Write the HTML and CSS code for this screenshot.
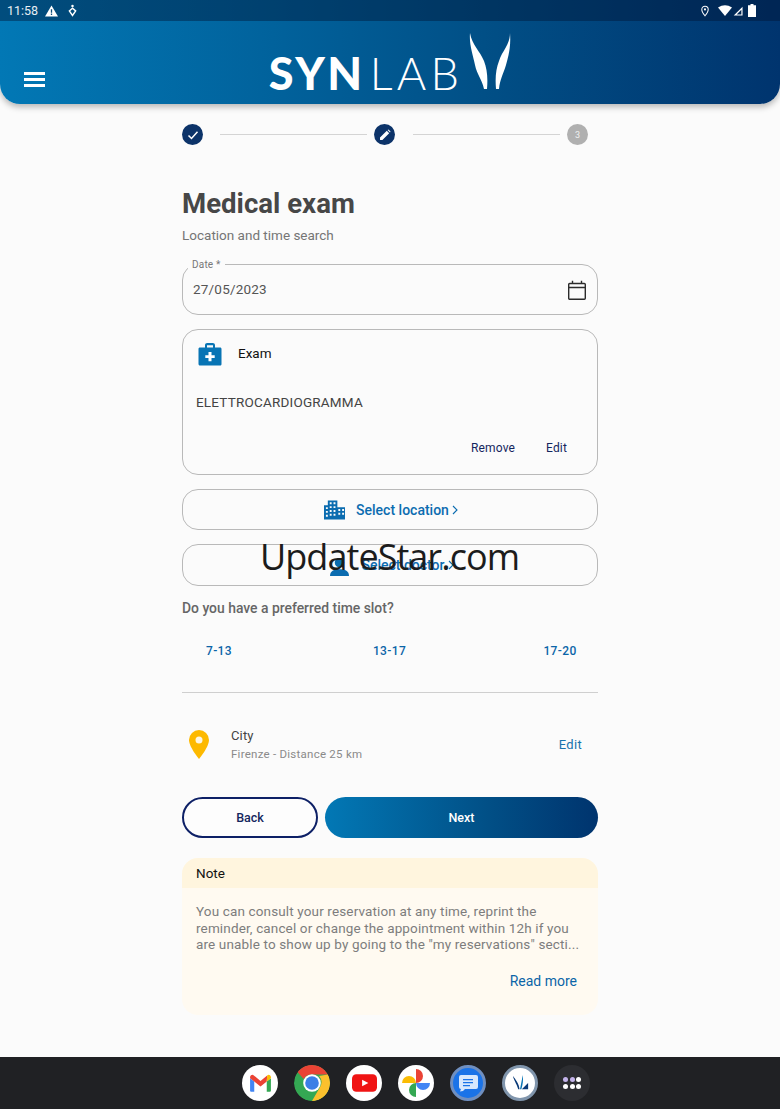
FILE: index.html
```html
<!DOCTYPE html>
<html lang="en">
<head>
<meta charset="utf-8">
<title>Medical exam</title>
<link rel="stylesheet" href="styles.css">
</head>
<body>
<div class="app">
  <header class="appbar">
    <div class="status">
      <div class="status-left">
        <span class="clock">11:58</span>
        <svg class="st-warn" viewBox="0 0 14 12"><path d="M7 0 14 12H0Z" fill="#fff"/><path d="M6.300 4h1.400v4H6.300zM6.300 8.800h1.400v1.400H6.300z" fill="#0a4a78"/></svg>
        <svg class="st-acc" viewBox="0 0 10 14"><circle cx="5" cy="2" r="1.400" fill="#fff"/><path d="M1.500 7.500 5 4.500l3.500 3L5 12.500Z" fill="none" stroke="#fff" stroke-width="1.600"/></svg>
      </div>
      <div class="status-right">
        <svg class="st-pin" viewBox="0 0 10 14"><path d="M5 1a4 4 0 0 1 4 4c0 3-4 8-4 8S1 8 1 5a4 4 0 0 1 4-4Z" fill="none" stroke="#fff" stroke-width="1.300"/><circle cx="5" cy="5" r="1.300" fill="#fff"/></svg>
        <svg class="st-wifi" viewBox="0 0 14 11"><path d="M0 2.500Q7-2 14 2.500L7 11Z" fill="#fff"/></svg>
        <svg class="st-sig" viewBox="0 0 11 11"><path d="M10.500.8v9.700H.8ZM9.200 4 4 9.400h5.200Z" fill="#fff" fill-rule="evenodd"/></svg>
        <svg class="st-bat" viewBox="0 0 8 13"><path d="M2.500 0h3v1.200H8V13H0V1.200h2.500Z" fill="#fff"/></svg>
      </div>
    </div>
    <div class="toolbar">
      <button class="burger" aria-label="Menu"><span></span><span></span><span></span></button>
      <div class="logo">
        <span class="logo-text"><b>SYN</b><span class="logo-lab">LAB</span></span>
        <svg class="logo-mark" viewBox="0 0 42 56"><path d="M1 0C0 12 4 22 6 32c2 10 7 14 9 24h3c1-12 0-20-3-28C11 18 3 12 1 0ZM41 0c0 12-8 18-11 28-3 8-4 16-3 28h3c1-10 4-14 7-24 3-10 5-20 4-32Z" fill="#fff"/></svg>
      </div>
    </div>
  </header>

  <main class="content">
    <div class="stepper">
      <span class="step done"><svg viewBox="0 0 12 12"><path d="M1.500 6.500 4.500 9.500 10.500 2.800" fill="none" stroke="#fff" stroke-width="1.500"/></svg></span>
      <span class="step-line"></span>
      <span class="step done"><svg viewBox="0 0 12 12"><path d="M1 11V8.600L7.800 1.800l2.400 2.400L3.400 11ZM8.600 1l.9-.5 2 2-.5.9Z" fill="#fff"/></svg></span>
      <span class="step-line"></span>
      <span class="step todo">3</span>
    </div>

    <h1 class="title">Medical exam</h1>
    <p class="subtitle">Location and time search</p>

    <div class="date-field">
      <span class="date-label">Date *</span>
      <span class="date-value">27/05/2023</span>
      <svg class="cal" viewBox="0 0 18 20"><path d="M1.700 3.500h14.600a1 1 0 0 1 1 1v13.800a1 1 0 0 1-1 1H1.700a1 1 0 0 1-1-1V4.500a1 1 0 0 1 1-1ZM.7 7.500h16.600M4.500 .8v2.700M13.500 .8v2.700" fill="none" stroke="#2b2b2b" stroke-width="1.400"/></svg>
    </div>

    <section class="exam-card">
      <div class="exam-head">
        <svg class="kit" viewBox="0 0 24 24"><path d="M2 5.500h5V3.200C7 1.900 8 1 9.200 1h5.600C16 1 17 1.900 17 3.200v2.300h5c1 0 1.500.6 1.500 1.500v15c0 1-.6 1.500-1.500 1.500H2c-1 0-1.500-.6-1.500-1.500V7c0-1 .6-1.500 1.500-1.500Zm7-2.300v2.300h6V3.200Z" fill="#0874b4" fill-rule="evenodd"/><path d="M10.500 10h3v3.200h3.200v2.800h-3.200v3.200h-3V16H7.300v-2.800h3.200Z" fill="#fff"/></svg>
        <span class="exam-title">Exam</span>
      </div>
      <p class="exam-name">ELETTROCARDIOGRAMMA</p>
      <div class="exam-actions"><span>Remove</span><span>Edit</span></div>
    </section>

    <div class="select-btn sel-loc">
      <svg class="bld" viewBox="0 0 22 20"><path d="M4 0h10v7h8v13H0V5h4ZM6 2v2h2V2Zm4 0v2h2V2ZM6 6v2h2V6Zm4 0v2h2V6ZM2 7v2h2V7Zm4 3v2h2v-2Zm4 0v2h2v-2Zm5-1v2h2V9Zm4 0v2h2V9ZM2 11v2h2v-2Zm4 3v2h2v-2Zm4 0v2h2v-2Zm5-1v2h2v-2Zm4 0v2h2v-2ZM2 15v2h2v-2Z" fill="#0b6cb0" fill-rule="evenodd"/></svg>
      <span class="sel-text">Select location</span>
      <svg class="chev" viewBox="0 0 6 10"><path d="M1 1l4 4-4 4" fill="none" stroke="#0b6cb0" stroke-width="1.100"/></svg>
    </div>
    <div class="select-btn sel-doc">
      <svg class="person" viewBox="0 0 20 20"><circle cx="10" cy="6" r="5" fill="#0b6cb0"/><path d="M0 20c0-5 4-7 10-7s10 2 10 7Z" fill="#0b6cb0"/></svg>
      <span class="sel-text">Select doctor</span>
      <svg class="chev" viewBox="0 0 6 10"><path d="M1 1l4 4-4 4" fill="none" stroke="#0b6cb0" stroke-width="1.100"/></svg>
    </div>

    <p class="question">Do you have a preferred time slot?</p>
    <div class="slots"><span>7-13</span><span>13-17</span><span>17-20</span></div>
    <hr class="divider">

    <div class="city">
      <svg class="pin" viewBox="0 0 20 29"><path d="M10 0a10 10 0 0 1 10 10c0 7-10 19-10 19S0 17 0 10A10 10 0 0 1 10 0Z" fill="#fdb900"/><circle cx="10" cy="10" r="3.500" fill="#fdf6e3"/></svg>
      <div class="city-text">
        <span class="city-name">City</span>
        <span class="city-sub">Firenze - Distance 25 km</span>
      </div>
      <span class="city-edit">Edit</span>
    </div>

    <div class="actions">
      <button class="btn-back">Back</button>
      <button class="btn-next">Next</button>
    </div>

    <section class="note">
      <div class="note-head">Note</div>
      <div class="note-body">
        <p class="note-text">You can consult your reservation at any time, reprint the reminder, cancel or change the appointment within 12h if you are unable to show up by going to the "my reservations" secti...</p>
        <div class="note-more">Read more</div>
      </div>
    </section>
  </main>

  <nav class="dock">
    <span class="app-icon white">
      <svg viewBox="0 0 24 24" width="25" height="25"><path d="M2 7v12a1 1 0 0 0 1 1h3V10Z" fill="#4285f4"/><path d="M18 10v10h3a1 1 0 0 0 1-1V7Z" fill="#34a853"/><path d="M2 7V6C2 3.800 4.300 3 5.600 4.200L12 9.500 18.400 4.200 18 10l-6 4.800L6 10Z" fill="#ea4335"/><path d="M18.400 4.200C19.700 3 22 3.800 22 6v1l-4 3Z" fill="#fbbc04"/></svg>
    </span>
    <span class="app-icon">
      <svg viewBox="0 0 36 36" width="36" height="36"><circle cx="18" cy="18" r="18" fill="#34a853"/><path d="M18 0a18 18 0 0 1 16 9.500H18A9 9 0 0 0 9.700 14L3 6.500A18 18 0 0 1 18 0Z" fill="#ea4335"/><path d="M34 9.500A18 18 0 0 1 18 36l7.800-13.500A9 9 0 0 0 25 11Z" fill="#fbc02d"/><circle cx="18" cy="18" r="8.800" fill="#fff"/><circle cx="18" cy="18" r="6.800" fill="#3d7fe6"/></svg>
    </span>
    <span class="app-icon white">
      <svg viewBox="0 0 26 18" width="25" height="18"><rect width="26" height="18" rx="4.500" fill="#f01414"/><path d="M10.500 5.500 17 9l-6.500 3.500Z" fill="#fff"/></svg>
    </span>
    <span class="app-icon white">
      <svg viewBox="0 0 28 28" width="28" height="28"><path d="M14 14V0a7 7 0 0 1 0 14Z" fill="#ea4335"/><path d="M14 14H0a7 7 0 0 1 14 0Z" fill="#fbbc04"/><path d="M14 14v14a7 7 0 0 1 0-14Z" fill="#34a853"/><path d="M14 14h14a7 7 0 0 1-14 0Z" fill="#4285f4"/></svg>
    </span>
    <span class="app-icon msg">
      <svg viewBox="0 0 20 18" width="20" height="18"><path d="M3 1h15a2 2 0 0 1 2 2v10a2 2 0 0 1-2 2H7l-2 2-3 .5L3 15a2 2 0 0 1-2-2V3a2 2 0 0 1 2-2Z" fill="#d8e8fd"/><path d="M5 5h10v1.300H5zM5 8h10v1.300H5zM5 11h7v1.300H5z" fill="#1a73e8"/></svg>
    </span>
    <span class="app-icon syn">
      <svg viewBox="0 0 22 20" width="20" height="18"><path d="M3 2c1 5 4 8 6 15h1.500C10 11 6 6 3 2Z" fill="#0a3a78"/><path d="M14 1c-1 6-2 11-3 16h1.500C14 12 15 6 14 1Z" fill="#0874b4"/><path d="M13 17 20 10v7Z" fill="#0a3a78"/></svg>
    </span>
    <span class="app-icon grid"><i class="p"></i><i class="p"></i><i></i><i></i><i></i><i></i></span>
  </nav>
</div>
<div class="watermark">UpdateStar.com</div>
</body>
</html>
```
FILE: styles.css
```css
* { box-sizing: border-box; }
html, body { margin: 0; height: 100%; }
body { background: #fbfbfb; font-family: Roboto, "Liberation Sans", sans-serif; position: relative; overflow: hidden; }
p, h1 { margin: 0; }
button { font-family: inherit; }

.app { height: 1109px; display: flex; flex-direction: column; }

.appbar {
  height: 104px; flex: none;
  border-radius: 0 0 20px 20px;
  background: linear-gradient(90deg, #0278b5 0%, #01629c 35%, #014f86 62%, #00346e 100%);
  box-shadow: 0 3px 6px rgba(0, 0, 0, .28);
  display: flex; flex-direction: column;
}
.status {
  height: 21px; flex: none; padding: 0 24px 0 7px;
  background: rgba(0, 20, 50, .42);
  display: flex; justify-content: space-between; align-items: center;
  color: #fff;
}
.status-left, .status-right { display: flex; align-items: center; }
.clock { font-size: 12.500px; color: #e8eef3; }
.st-warn { width: 13px; height: 12px; margin-left: 7px; }
.st-acc { width: 9px; height: 13px; margin-left: 10px; }
.st-pin { width: 8px; height: 12px; margin-right: 9px; }
.st-wifi { width: 14px; height: 11px; }
.st-sig { width: 10px; height: 10px; margin-left: 1px; }
.st-bat { width: 8px; height: 13px; margin-left: 5px; }

.toolbar { flex: 1; position: relative; display: flex; justify-content: center; }
.burger {
  position: absolute; left: 24px; top: 51px;
  width: 21px; height: 15px; padding: 0; border: 0; background: none;
  display: flex; flex-direction: column; justify-content: space-between;
}
.burger span { display: block; height: 3px; background: #fff; }
.logo { display: flex; align-items: flex-end; height: 56px; margin-top: 12px; }
.logo-text { font-family: Lato, sans-serif; font-size: 45px; line-height: 40px; height: 36px; color: #fff; font-weight: 300; white-space: nowrap; }
.logo-text b { font-weight: 900; letter-spacing: 2.500px; }
.logo-lab { letter-spacing: 4.300px; margin-left: 5px; }
.logo-mark { width: 42px; height: 56px; margin-left: 6px; }

.content { flex: 1; width: 416px; margin: 0 auto; display: flex; flex-direction: column; }

.stepper { display: flex; align-items: center; height: 21px; margin-top: 20px; padding-right: 10px; }
.step {
  width: 21px; height: 21px; border-radius: 50%; flex: none;
  display: flex; align-items: center; justify-content: center;
  font-size: 9px; color: #f0f0f0;
}
.step svg { width: 12px; height: 12px; }
.step.done { background: #0c3369; }
.step.todo { background: #b0b0b0; }
.step-line { flex: 1; height: 1px; background: #d4d4d4; margin: 0 7px 0 17px; }
.step-line + .step.done + .step-line { margin-left: 18px; }

.title { font-size: 27.600px; line-height: 32px; font-weight: 700; color: #474747; margin-top: 43px; }
.subtitle { font-size: 13.500px; line-height: 16px; color: #757575; margin-top: 7px; }

.date-field {
  position: relative; height: 51px; margin-top: 21px;
  border: 1px solid #b9b9b9; border-radius: 16px;
  display: flex; align-items: center; justify-content: space-between;
  padding: 0 11px 0 10px;
}
.date-label { position: absolute; left: 5px; top: -6px; padding: 0 4px; font-size: 10px; line-height: 11px; color: #777; background: #fbfbfb; letter-spacing: .2px; }
.date-value { font-size: 13.500px; color: #555; letter-spacing: .2px; margin-top: -2px; }
.cal { width: 18px; height: 20px; }

.exam-card { height: 146px; margin-top: 14px; border: 1px solid #b9b9b9; border-radius: 16px; padding: 12px 30px 0 13px; display: flex; flex-direction: column; }
.exam-head { display: flex; align-items: center; height: 24px; padding-left: 2px; }
.kit { width: 24px; height: 24px; }
.exam-title { font-size: 13.500px; font-weight: 400; color: #111; margin: -2px 0 0 16px; }
.exam-name { font-size: 13.500px; color: #444; margin-top: 28px; line-height: 16px; letter-spacing: .2px; }
.exam-actions { display: flex; justify-content: flex-end; gap: 31px; margin-top: 31px; font-size: 12px; line-height: 14px; font-weight: 400; color: #14265e; letter-spacing: .15px; }

.select-btn { border: 1px solid #b9b9b9; border-radius: 16px; height: 41px; display: flex; align-items: center; justify-content: center; }
.sel-loc { margin-top: 14px; padding-left: 2px; }
.sel-doc { margin-top: 14px; height: 42px; padding-left: 4px; }
.sel-text { font-size: 14px; font-weight: 500; color: #0b6cb0; }
.sel-loc .sel-text { margin-left: 11px; }
.sel-doc .sel-text { margin-left: 12px; }
.bld { width: 21px; height: 20px; }
.person { width: 19px; height: 19px; margin-top: 2px; }
.chev { width: 6px; height: 10px; margin-left: 3px; }

.question { font-size: 13.900px; line-height: 16px; font-weight: 500; color: #666; margin-top: 14px; }
.slots { display: flex; justify-content: space-between; padding: 0 21px 0 20px; margin-top: 28px; font-size: 12px; line-height: 14px; font-weight: 500; color: #0b65a8; letter-spacing: .35px; }
.slots span { width: 34px; text-align: center; }
.divider { border: 0; border-top: 1px solid #cfcfcf; margin: 34px 0 0; width: 100%; }

.city { display: flex; align-items: center; height: 40px; margin-top: 31px; padding: 0 16px 0 7px; }
.pin { width: 20px; height: 29px; }
.city-text { flex: 1; display: flex; flex-direction: column; margin-left: 22px; padding-top: 2px; }
.city-name { font-size: 13px; line-height: 16px; color: #444; letter-spacing: .15px; }
.city-sub { font-size: 11.500px; line-height: 16px; color: #8a8a8a; margin-top: 2px; letter-spacing: .25px; }
.city-edit { font-size: 13px; font-weight: 400; color: #1873ad; letter-spacing: .3px; }

.actions { display: flex; gap: 7px; height: 41px; margin-top: 33px; }
.btn-back, .btn-next { border-radius: 21px; font-size: 12.500px; font-weight: 500; padding: 0; }
.btn-back { width: 136px; background: #fdfdfd; border: 2px solid #0d2066; color: #14265e; }
.btn-next { flex: 1; border: 0; color: #fff; background: linear-gradient(90deg, #0278b5 0%, #014f86 60%, #00346e 100%); }

.note { margin-top: 20px; border-radius: 16px; overflow: hidden; background: #fffaf1; height: 157px; }
.note-head { height: 30px; background: #fff5de; padding-left: 14px; font-size: 13.500px; font-weight: 400; line-height: 30px; color: #111; }
.note-body { padding: 15px 14px 0; }
.note-text { font-size: 13.500px; line-height: 16.500px; color: #7d7d7d; letter-spacing: .14px; }
.note-more { text-align: right; margin-top: 20px; padding-right: 7px; font-size: 14px; line-height: 16px; font-weight: 400; color: #0b65a8; }

.dock { height: 52px; flex: none; background: #202124; display: flex; justify-content: center; align-items: center; gap: 16px; padding-left: 52px; }
.app-icon { width: 36px; height: 36px; border-radius: 50%; display: flex; align-items: center; justify-content: center; overflow: hidden; flex: none; }
.app-icon.white { background: #fff; }
.app-icon.msg { background: #1a73e8; border: 3px solid #6f8fc0; }
.app-icon.syn { background: #fff; border: 3px solid #8095ac; }
.app-icon.grid { background: #2c2d31; display: grid; grid-template-columns: repeat(3, 5px); grid-auto-rows: 5px; gap: 1.500px; align-content: center; justify-content: center; align-items: stretch; }
.app-icon.grid i { background: #fff; border-radius: 50%; }
.app-icon.grid i.p { background: #c3b3ea; }

.watermark { position: absolute; left: 260px; top: 532px; font-family: "Open Sans", "Noto Sans", sans-serif; font-size: 36px; line-height: 50px; letter-spacing: -.95px; color: #1c1c1c; white-space: nowrap; }
```
